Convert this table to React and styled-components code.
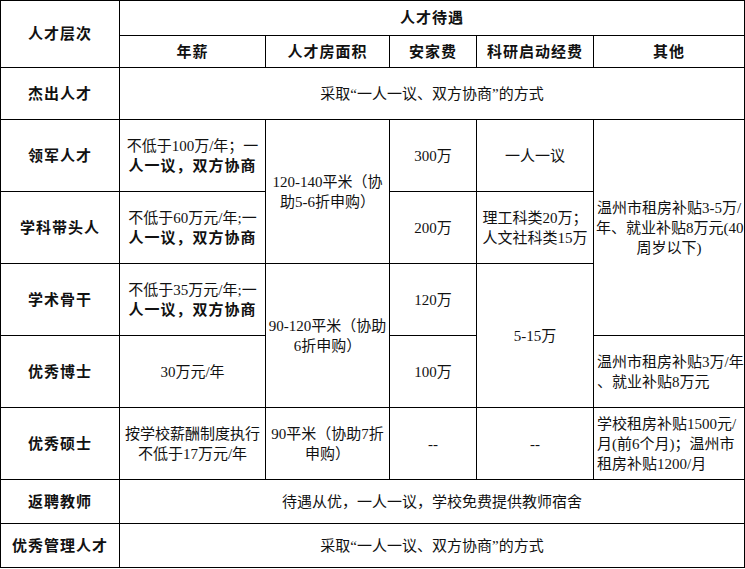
import React from "react";
import styled, { createGlobalStyle } from "styled-components";

const Global = createGlobalStyle`
  html, body {
    margin: 0;
    padding: 0;
    background: #fff;
  }
  body {
    font-family: "Liberation Serif", "Noto Sans CJK SC", serif;
    color: #111;
  }
`;

const Table = styled.table`
  border-collapse: collapse;
  table-layout: fixed;
  width: 744px;
  margin: 0;
  font-size: 15px;
  line-height: 20px;
`;

const Row = styled.tr`
  height: ${(p) => p.h}px;
`;

const Cell = styled.td`
  border: 1px solid #000;
  padding: 0 2px;
  text-align: ${(p) => p.align || "center"};
  vertical-align: middle;
  font-weight: ${(p) => (p.bold ? 700 : 400)};
  letter-spacing: ${(p) => (p.bold ? "1px" : "0")};
  white-space: nowrap;
  ${(p) => p.align === "left" && "padding-left: 3px;"}
`;

const Head = styled(Cell).attrs({ as: "th", bold: true })``;

const Line = styled.div`
  white-space: nowrap;
  font-weight: ${(p) => (p.bold ? 700 : "inherit")};
  letter-spacing: ${(p) => (p.bold ? "1px" : "inherit")};
`;

const Lines = ({ items }) =>
  items.map((t, i) =>
    typeof t === "string" ? (
      <Line key={i}>{t}</Line>
    ) : (
      <Line key={i} bold>
        {t.b}
      </Line>
    )
  );

const cols = [119, 146, 124, 87, 117, 151];

export default function App() {
  return (
    <>
      <Global />
      <Table>
        <colgroup>
          {cols.map((w, i) => (
            <col key={i} style={{ width: w }} />
          ))}
        </colgroup>
        <tbody>
          <Row h={35}>
            <Head rowSpan={2}>人才层次</Head>
            <Head colSpan={5}>人才待遇</Head>
          </Row>
          <Row h={32}>
            <Head>年薪</Head>
            <Head>人才房面积</Head>
            <Head>安家费</Head>
            <Head>科研启动经费</Head>
            <Head>其他</Head>
          </Row>
          <Row h={52}>
            <Head>杰出人才</Head>
            <Cell colSpan={5}>采取“一人一议、双方协商”的方式</Cell>
          </Row>
          <Row h={72}>
            <Head>领军人才</Head>
            <Cell>
              <Lines items={["不低于100万/年；一", { b: "人一议，双方协商" }]} />
            </Cell>
            <Cell rowSpan={2}>
              <Lines items={["120-140平米（协", "助5-6折申购）"]} />
            </Cell>
            <Cell>300万</Cell>
            <Cell>一人一议</Cell>
            <Cell rowSpan={3}>
              <Lines
                items={["温州市租房补贴3-5万/", "年、就业补贴8万元(40", "周岁以下)"]}
              />
            </Cell>
          </Row>
          <Row h={72}>
            <Head>学科带头人</Head>
            <Cell>
              <Lines items={["不低于60万元/年;一", { b: "人一议，双方协商" }]} />
            </Cell>
            <Cell>200万</Cell>
            <Cell>
              <Lines items={["理工科类20万；", "人文社科类15万"]} />
            </Cell>
          </Row>
          <Row h={72}>
            <Head>学术骨干</Head>
            <Cell>
              <Lines items={["不低于35万元/年;一", { b: "人一议，双方协商" }]} />
            </Cell>
            <Cell rowSpan={2}>
              <Lines items={["90-120平米（协助", "6折申购）"]} />
            </Cell>
            <Cell>120万</Cell>
            <Cell rowSpan={2}>5-15万</Cell>
          </Row>
          <Row h={72}>
            <Head>优秀博士</Head>
            <Cell>30万元/年</Cell>
            <Cell>100万</Cell>
            <Cell align="left">
              <Lines items={["温州市租房补贴3万/年", "、就业补贴8万元"]} />
            </Cell>
          </Row>
          <Row h={72}>
            <Head>优秀硕士</Head>
            <Cell>
              <Lines items={["按学校薪酬制度执行", "不低于17万元/年"]} />
            </Cell>
            <Cell>
              <Lines items={["90平米（协助7折", "申购）"]} />
            </Cell>
            <Cell>--</Cell>
            <Cell>--</Cell>
            <Cell align="left">
              <Lines
                items={["学校租房补贴1500元/", "月(前6个月)；温州市", "租房补贴1200/月"]}
              />
            </Cell>
          </Row>
          <Row h={44}>
            <Head>返聘教师</Head>
            <Cell colSpan={5}>待遇从优，一人一议，学校免费提供教师宿舍</Cell>
          </Row>
          <Row h={44}>
            <Head>优秀管理人才</Head>
            <Cell colSpan={5}>采取“一人一议、双方协商”的方式</Cell>
          </Row>
        </tbody>
      </Table>
    </>
  );
}
